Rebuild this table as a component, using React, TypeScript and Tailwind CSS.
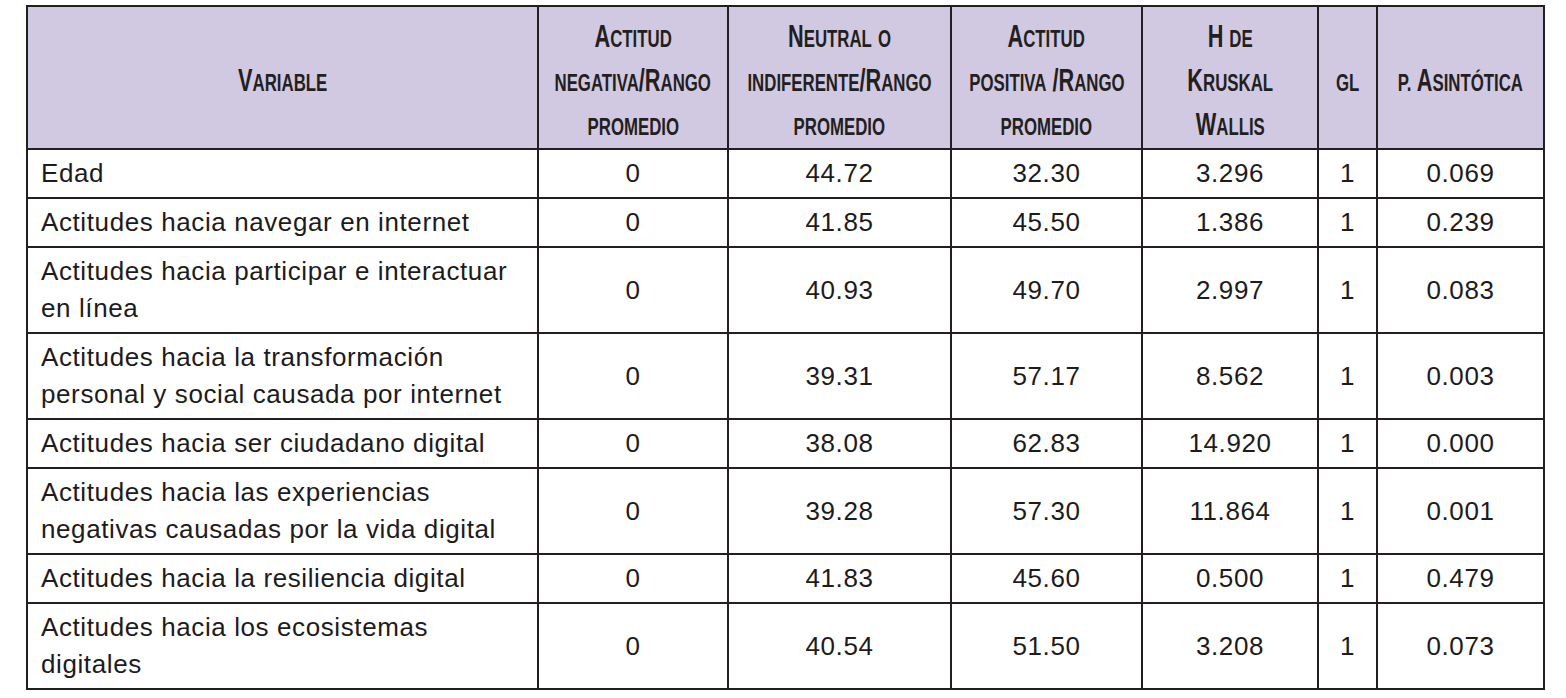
import React from "react";

// Small-caps header text: capitals stay large, lowercase letters become smaller capitals
const SmallCaps = ({ text }: { text: string }) => {
  const parts: { small: boolean; s: string }[] = [];
  for (const ch of text) {
    const small = ch !== ch.toUpperCase() || ch === ".";
    const last = parts[parts.length - 1];
    if (last && last.small === small) last.s += ch;
    else parts.push({ small, s: ch });
  }
  return (
    <>
      {parts.map((p, i) =>
        p.small ? (
          <span key={i} className="text-[24px] uppercase">
            {p.s}
          </span>
        ) : (
          <span key={i} className="text-[31px]">
            {p.s}
          </span>
        )
      )}
    </>
  );
};

const headers: string[][] = [
  ["Variable"],
  ["Actitud", "negativa/Rango", "promedio"],
  ["Neutral o", "indiferente/Rango", "promedio"],
  ["Actitud", "positiva /Rango", "promedio"],
  ["H de", "Kruskal", "Wallis"],
  ["gl"],
  ["p. Asintótica"],
];

const rows: { label: string[]; values: string[] }[] = [
  { label: ["Edad"], values: ["0", "44.72", "32.30", "3.296", "1", "0.069"] },
  { label: ["Actitudes hacia navegar en internet"], values: ["0", "41.85", "45.50", "1.386", "1", "0.239"] },
  { label: ["Actitudes hacia participar e interactuar", "en línea"], values: ["0", "40.93", "49.70", "2.997", "1", "0.083"] },
  { label: ["Actitudes hacia la transformación", "personal y social causada por internet"], values: ["0", "39.31", "57.17", "8.562", "1", "0.003"] },
  { label: ["Actitudes hacia ser ciudadano digital"], values: ["0", "38.08", "62.83", "14.920", "1", "0.000"] },
  { label: ["Actitudes hacia las experiencias", "negativas causadas por la vida digital"], values: ["0", "39.28", "57.30", "11.864", "1", "0.001"] },
  { label: ["Actitudes hacia la resiliencia digital"], values: ["0", "41.83", "45.60", "0.500", "1", "0.479"] },
  { label: ["Actitudes hacia los ecosistemas", "digitales"], values: ["0", "40.54", "51.50", "3.208", "1", "0.073"] },
];

const colWidths = ["w-[511px]", "w-[190px]", "w-[223px]", "w-[191px]", "w-[176px]", "w-[59px]", "w-[167px]"];

export default function App() {
  return (
    <div className="min-h-[698px] w-[1566px] bg-white pl-[26px] pt-[5px]">
      <table className="w-[1517px] table-fixed border-collapse border-2 border-[#231f20] text-[#1d1b1c] font-['Liberation_Sans',Arial,sans-serif]">
        <colgroup>
          {colWidths.map((w, i) => (
            <col key={i} className={w} />
          ))}
        </colgroup>
        <thead>
          <tr className="bg-[#d1c8e1]">
            {headers.map((lines, i) => (
              <th
                key={i}
                className="border-2 border-[#231f20] px-0 pt-[8px] pb-[1px] align-middle text-center font-bold text-[#231f20] font-['Liberation_Sans',Arial,sans-serif]"
              >
                {lines.map((l, j) => (
                  <span key={j} className="flex h-[44px] justify-center whitespace-nowrap text-[31px] leading-[44px]">
                    <span className="inline-block shrink-0 scale-x-[0.7]">
                      <SmallCaps text={l} />
                    </span>
                  </span>
                ))}
              </th>
            ))}
          </tr>
        </thead>
        <tbody>
          {rows.map((r, i) => (
            <tr key={i}>
              <td className="border-2 border-[#231f20] px-[13px] py-[5px] align-middle text-[26px] leading-[37px] tracking-[0.6px]">
                {r.label.map((l, j) => (
                  <span key={j} className="block whitespace-nowrap">
                    {l}
                  </span>
                ))}
              </td>
              {r.values.map((v, j) => (
                <td
                  key={j}
                  className="border-2 border-[#231f20] px-1 py-[5px] text-center align-middle text-[26px] leading-[37px] tracking-[0.6px]"
                >
                  {v}
                </td>
              ))}
            </tr>
          ))}
        </tbody>
      </table>
    </div>
  );
}
